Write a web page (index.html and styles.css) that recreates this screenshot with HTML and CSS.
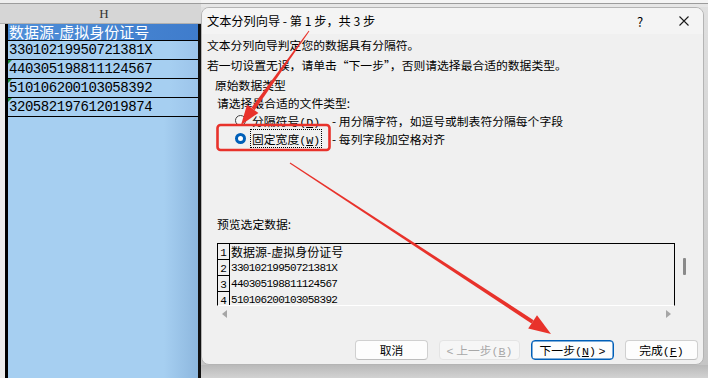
FILE: index.html
```html
<!DOCTYPE html>
<html lang="zh-CN">
<head>
    <meta charset="UTF-8">
    <title>文本分列向导</title>
    <link rel="stylesheet" href="styles.css">
</head>
<body>
    <div class="screen">
        <!-- spreadsheet column behind the dialog -->
        <div class="sheet">
            <div class="sheet-top"></div>
            <div class="col-head">H</div>
            <div class="cells">
                <div class="cell cell-head">数据源-虚拟身份证号</div>
                <div class="cell">33010219950721381X</div>
                <div class="cell flag">440305198811124567</div>
                <div class="cell flag">510106200103058392</div>
                <div class="cell flag last">320582197612019874</div>
                <div class="fill"></div>
            </div>
        </div>

        <div class="desk">
            <div class="desk-top"></div>
            <div class="dialog">
                <div class="titlebar">
                    <span class="title">文本分列向导 - 第 1 步，共 3 步</span>
                    <span class="tb-help">?</span>
                    <span class="tb-close">
                        <svg width="10" height="10" viewBox="0 0 10 10"><path d="M0.5 0.5 L9.5 9.5 M9.5 0.5 L0.5 9.5" stroke="#1a1a1a" stroke-width="1.1" fill="none"/></svg>
                    </span>
                </div>
                <div class="body">
                    <div class="line first">文本分列向导判定您的数据具有分隔符。</div>
                    <div class="line">若一切设置无误，请单击“下一步”，否则请选择最合适的数据类型。</div>
                    <div class="line group-label">原始数据类型</div>
                    <div class="prompt">请选择最合适的文件类型:</div>
                    <div class="opt">
                        <span class="radio"></span>
                        <span class="opt-label">分隔符号<span class="key">(<u>D</u>)</span></span>
                        <span class="opt-desc">- 用分隔字符，如逗号或制表符分隔每个字段</span>
                    </div>
                    <div class="opt">
                        <span class="radio checked"></span>
                        <span class="opt-label focus">固定宽度<span class="key">(<u>W</u>)</span></span>
                        <span class="opt-desc">- 每列字段加空格对齐</span>
                    </div>

                    <div class="line preview-label">预览选定数据:</div>
                    <div class="preview">
                        <div class="preview-box">
                            <div class="prow"><span class="pnum">1</span><span class="ptext cjk">数据源-虚拟身份证号</span></div>
                            <div class="prow"><span class="pnum">2</span><span class="ptext">33010219950721381X</span></div>
                            <div class="prow"><span class="pnum">3</span><span class="ptext">440305198811124567</span></div>
                            <div class="prow"><span class="pnum">4</span><span class="ptext">510106200103058392</span></div>
                        </div>
                        <div class="vthumb"></div>
                    </div>
                    <div class="hscroll">
                        <span class="arrow-left"></span>
                        <span class="arrow-right"></span>
                    </div>

                    <div class="buttons">
                        <button class="btn btn-cancel">取消</button>
                        <button class="btn btn-back" disabled><span class="key">&lt;</span> 上一步<span class="key">(<u>B</u>)</span></button>
                        <button class="btn btn-next">下一步<span class="key">(<u>N</u>)</span> <span class="key">&gt;</span></button>
                        <button class="btn btn-finish">完成<span class="key">(<u>F</u>)</span></button>
                    </div>
                </div>
            </div>
            <div class="desk-bottom"></div>
        </div>

        <!-- red annotations drawn over the screenshot -->
        <svg class="marks" width="708" height="378" viewBox="0 0 708 378">
            <rect x="217.5" y="125" width="112" height="25" rx="3" fill="none" stroke="#e8322b" stroke-width="2.6"/>
            <polygon points="308.6,30.7 309.4,31.3 254.6,110.2 251.4,107.8" fill="#e8322b"/>
            <polygon points="241,125 258.4,112.9 247,104.7" fill="#e8322b"/>
            <polygon points="289.7,163.5 290.3,162.5 533.7,320.2 531.5,323.6" fill="#e8322b"/>
            <polygon points="551,334 528.2,328.6 537,315.2" fill="#e8322b"/>
        </svg>
    </div>
</body>
</html>
```

FILE: styles.css
```css
:root {
    --sheet-blue: #a6cff1;
    --sheet-blue-dark: #8db7de;
    --dialog-bg: #f0f0f0;
    --accent: #005fb8;
    --ui-font: "Noto Sans CJK SC", "Noto Sans", sans-serif;
    --mono-font: "Liberation Mono", "Noto Sans CJK SC", monospace;
}

* {
    box-sizing: border-box;
}

body {
    margin: 0;
    background-color: #d0d0d0;
    overflow: hidden;
}

.screen {
    position: relative;
    display: flex;
    width: 708px;
    height: 378px;
    overflow: hidden;
    font-family: var(--ui-font);
    color: #000;
}

/* ---------- spreadsheet ---------- */

.sheet {
    width: 201px;
    display: flex;
    flex-direction: column;
    background-color: #ececec;
}

.sheet-top {
    height: 4px;
    background-color: #eeeeee;
    border-bottom: 1px solid #9c9c9c;
}

.col-head {
    height: 20px;
    padding-left: 7px;
    line-height: 20px;
    text-align: center;
    font-family: "Liberation Serif", serif;
    font-size: 13px;
    color: #333;
    background-color: #d6d6d6;
    border-bottom: 1px solid #b0b0b0;
}

.cells {
    flex: 1;
    display: flex;
    flex-direction: column;
    margin-left: 5px;
    border-left: 3px solid #000;
    border-right: 3px solid #111;
    background-color: var(--sheet-blue);
}

.cell {
    position: relative;
    height: 19px;
    padding-left: 1px;
    border-top: 1px solid #000;
    line-height: 18px;
    font-family: var(--mono-font);
    font-size: 14px;
    letter-spacing: -0.45px;
    color: #000;
    background: linear-gradient(to right, var(--sheet-blue) 85%, #9cc4ea 100%);
}

.cell.last {
    border-bottom: 1px solid #000;
    height: 20px;
}

.cell-head {
    height: 16px;
    border-top: none;
    line-height: 16px;
    font-family: var(--ui-font);
    font-size: 15px;
    letter-spacing: 0;
    color: #fff;
    background: linear-gradient(to right, #4f8fd8, #3f7ccc);
}

.cell.flag::before {
    content: "";
    position: absolute;
    top: 0;
    left: 0;
    border-top: 4px solid #1e8a3a;
    border-right: 4px solid transparent;
}

.fill {
    flex: 1;
    background: linear-gradient(to right, var(--sheet-blue) 82%, var(--sheet-blue-dark) 100%);
}

/* ---------- desktop / dialog ---------- */

.desk {
    flex: 1;
    display: flex;
    flex-direction: column;
    background: linear-gradient(to bottom, #e0e0e0, #c4c4c4);
}

.desk-top {
    height: 7px;
    background-color: #e6e6e6;
    border-top: 3px solid #f4f4f4;
    box-shadow: inset 0 1px 0 #9c9c9c;
}

.dialog {
    height: 358px;
    margin-right: 4px;
    background-color: var(--dialog-bg);
    border: 1px solid #b4b4b4;
    border-radius: 8px;
    overflow: hidden;
    font-size: 11.8px;
}

.desk-bottom {
    flex: 1;
    background: linear-gradient(to bottom, #b9b9b9, #d2d2d2);
}

.titlebar {
    display: flex;
    align-items: center;
    height: 26px;
    padding-left: 5px;
    background-color: #f4f4f4;
}

.title {
    flex: 1;
    font-size: 12.2px;
}

.tb-help {
    width: 50px;
    text-align: center;
    font-size: 13px;
}

.tb-close {
    width: 38px;
    display: flex;
    justify-content: center;
}

.body {
    padding: 0 5px;
}

.line {
    height: 20px;
    line-height: 20px;
    white-space: nowrap;
}

.line.first {
    margin-top: 1px;
}

/* mnemonic keys use a fixed-width face like the original dialog */
.key {
    font-family: var(--mono-font);
    font-size: 11.6px;
}

.group-label {
    padding-left: 8px;
}

.prompt {
    height: 16px;
    line-height: 16px;
    padding-left: 10px;
}

.opt {
    display: flex;
    align-items: center;
    height: 18px;
    padding-left: 28px;
    white-space: nowrap;
}

.radio {
    width: 11px;
    height: 11px;
    margin-right: 4px;
    border: 1px solid #404040;
    border-radius: 50%;
    background-color: #f8f8f8;
}

.radio.checked {
    border: 3.5px solid var(--accent);
    background-color: #fff;
}

.opt-label {
    padding: 0 1px;
    border: 1px solid transparent;
}

.opt-label.focus {
    border: 1px dotted #000;
}

.opt-desc {
    margin-left: 10px;
}

.preview-label {
    margin-top: 67px;
    padding-left: 10px;
}

.preview {
    display: flex;
    margin-top: 9px;
    padding-left: 10px;
}

.preview-box {
    width: 458px;
    height: 63px;
    overflow: hidden;
    border: 1px solid #000;
    border-bottom-color: #fff;
}

.prow {
    display: flex;
    height: 16px;
}

.pnum {
    width: 12px;
    padding-top: 2px;
    border-right: 1px solid #000;
    border-bottom: 1px solid #000;
    font-family: var(--mono-font);
    font-size: 11px;
    line-height: 15px;
    text-align: center;
}

.ptext {
    padding-left: 1px;
    font-family: var(--mono-font);
    font-size: 11px;
    letter-spacing: -0.7px;
    line-height: 17px;
}

.ptext.cjk {
    font-family: var(--ui-font);
    font-size: 12px;
    letter-spacing: 0;
    line-height: 16px;
}

.vthumb {
    width: 3px;
    height: 17px;
    margin: 15px 0 0 8px;
    border-radius: 1px;
    background-color: #8a8a8a;
}

.hscroll {
    display: flex;
    justify-content: space-between;
    align-items: center;
    width: 458px;
    height: 16px;
    margin-left: 10px;
    padding: 0 4px 0 5px;
}

.arrow-left {
    border-right: 5px solid #a6a6a6;
    border-top: 4.5px solid transparent;
    border-bottom: 4.5px solid transparent;
}

.arrow-right {
    border-left: 5px solid #a6a6a6;
    border-top: 4.5px solid transparent;
    border-bottom: 4.5px solid transparent;
}

.buttons {
    display: flex;
    justify-content: flex-end;
    gap: 11px;
    margin-top: 18px;
}

.btn {
    height: 20px;
    padding: 0;
    font-family: var(--ui-font);
    font-size: 11.8px;
    line-height: 18px;
    color: #000;
    background-color: #fdfdfd;
    border: 1px solid #d0d0d0;
    border-bottom-color: #bdbdbd;
    border-radius: 4px;
}

.btn-cancel,
.btn-finish {
    width: 73px;
}

.btn-back {
    width: 81px;
    color: #a8a8a8;
    background-color: #f6f6f6;
    border-color: #e4e4e4;
}

.btn-next {
    width: 83px;
    border-color: var(--accent);
    box-shadow: inset 0 0 0 0.5px var(--accent);
}

.marks {
    position: absolute;
    top: 0;
    left: 0;
    pointer-events: none;
}
```
